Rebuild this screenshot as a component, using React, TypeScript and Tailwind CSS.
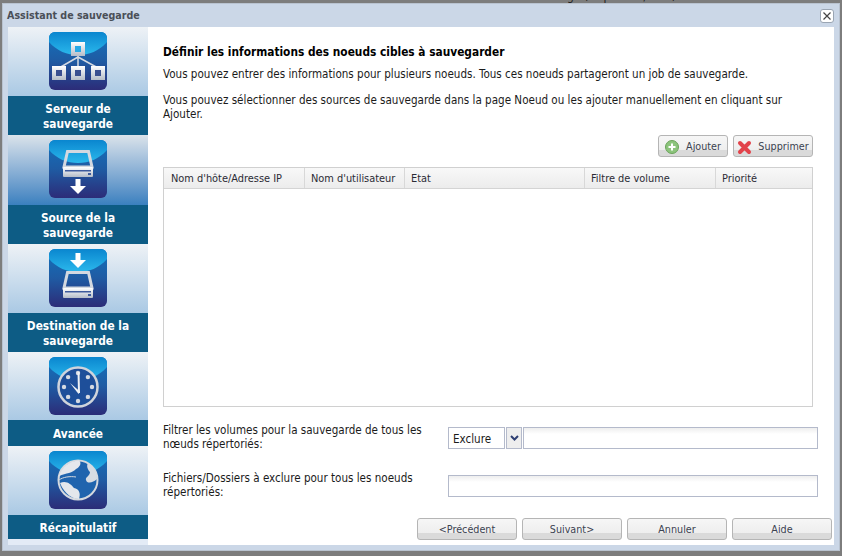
import React from 'react'

const font = { fontFamily: '"DejaVu Sans Condensed", "DejaVu Sans", sans-serif' }

function Tile({ id, children }: { id: string, children: React.ReactNode }) {
    return (
        <svg width="58" height="58" viewBox="0 0 58 58" className="block">
            <defs>
                <linearGradient id={`bg-${id}`} x1="0" y1="0" x2="0" y2="1">
                    <stop offset="0" stopColor="#1272bd" />
                    <stop offset="0.5" stopColor="#1f5ba3" />
                    <stop offset="1" stopColor="#2c2c78" />
                </linearGradient>
                <linearGradient id={`dome-${id}`} x1="0" y1="0" x2="0" y2="1">
                    <stop offset="0" stopColor="#0a86cf" />
                    <stop offset="1" stopColor="#2bb8ec" />
                </linearGradient>
                <linearGradient id={`metal-${id}`} x1="0" y1="0" x2="0" y2="1">
                    <stop offset="0" stopColor="#ffffff" />
                    <stop offset="1" stopColor="#b4bcc8" />
                </linearGradient>
            </defs>
            <rect width="58" height="58" rx="6" fill={`url(#bg-${id})`} />
            <path d="M0 6a6 6 0 0 1 6-6h46a6 6 0 0 1 6 6v4C50 19 40 23 29 23S8 19 0 10z" fill={`url(#dome-${id})`} />
            {children}
        </svg>
    )
}

function NetworkIcon() {
    const m = 'url(#metal-net)'
    return (
        <Tile id="net">
            <path d="M29 23V35M29 25L10 36M29 25L49 36" stroke="#d5dae2" strokeWidth="1.500" fill="none" />
            <rect x="22" y="10" width="14" height="14" fill={m} />
            <rect x="26" y="14" width="6" height="6" fill="#27a9e6" />
            <rect x="3" y="34" width="14" height="14" fill={m} />
            <rect x="22" y="34" width="14" height="14" fill={m} />
            <rect x="42" y="34" width="14" height="14" fill={m} />
            <rect x="7" y="38" width="6" height="6" fill="#3a4f90" />
            <rect x="26" y="38" width="6" height="6" fill="#3a4f90" />
            <rect x="46" y="38" width="6" height="6" fill="#3a4f90" />
        </Tile>
    )
}

function Drive({ y, id }: { y: number, id: string }) {
    return (
        <g transform={`translate(0 ${y})`}>
            <path d="M18.500 1.500H39.500L43 17H15Z" fill="none" stroke="#d3d8e0" strokeWidth="3" />
            <rect x="14" y="17" width="30" height="10" rx="1" fill={`url(#metal-${id})`} />
            <rect x="16" y="20" width="26" height="1.500" fill="#3d5a9c" />
            <rect x="39" y="23" width="3" height="2" fill="#3d5a9c" />
        </g>
    )
}

function SourceIcon() {
    return (
        <Tile id="src">
            <Drive y={10} id="src" />
            <path d="M26.500 39H31.500V46H37L29 54L21 46H26.500Z" fill="#fff" />
        </Tile>
    )
}

function DestIcon() {
    return (
        <Tile id="dst">
            <path d="M26.500 4H31.500V11H37L29 19L21 11H26.500Z" fill="#fff" />
            <Drive y={22} id="dst" />
        </Tile>
    )
}

function ClockIcon() {
    const dots = [0, 45, 90, 135, 180, 225, 270, 315]
    return (
        <Tile id="clk">
            <circle cx="29" cy="30" r="19.500" fill="#1e4f9a" stroke="#cfd4dc" strokeWidth="2.500" />
            {dots.map(a => (
                <circle
                    key={a}
                    cx={29 + 14 * Math.sin(a * Math.PI / 180)}
                    cy={30 - 14 * Math.cos(a * Math.PI / 180)}
                    r="2.200"
                    fill="#d5dae2"
                />
            ))}
            <path d="M28.500 15L30.500 15L31 36L29 36Z" fill="#eef1f5" />
            <path d="M21 26L31 34.500L29.500 37Z" fill="#eef1f5" />
        </Tile>
    )
}

function GlobeIcon() {
    return (
        <Tile id="glb">
            <circle cx="29" cy="29" r="19.500" fill="#2064ae" stroke="#d5d9df" strokeWidth="2" />
            <path d="M10 25C13 16 20 10 30 9.500C33 12 31 16 27 18C24 22 17 22 10 25Z" fill="#e4e7ec" />
            <path d="M39 12C45 16 48 22 48 28C44 32 38 33 37 29C36 26 41 25 41 21C39 19 37 15 39 12Z" fill="#d8dce3" />
            <path d="M11 32C17 29 22 33 25 37C30 38 32 42 30 48C24 48 16 44 11 32Z" fill="#e4e7ec" />
            <path d="M10 29C14 26 21 25 27 26" stroke="#d5d9df" strokeWidth="1" fill="none" />
        </Tile>
    )
}

function Step({ icon, label, barClass, dark, heightClass }: {
    icon: React.ReactNode, label: React.ReactNode, barClass: string, dark?: boolean, heightClass: string
}) {
    return (
        <div>
            <div className={`${heightClass} pt-[5px] flex justify-center bg-gradient-to-b ${dark ? 'from-[#dbe3ea] to-[#3a80bf]' : 'from-[#eef2f6] to-[#aac9e4]'}`}>
                {icon}
            </div>
            <div className={`${barClass} pt-[3px] bg-[#0d5c85] text-white font-bold text-[11.800px] leading-[15px] flex items-center justify-center text-center`}>
                <span>{label}</span>
            </div>
        </div>
    )
}

function Btn({ children, className = '' }: { children: React.ReactNode, className?: string }) {
    return (
        <button className={`h-[22px] pt-[2px] relative flex items-center justify-center rounded-[3px] border border-[#b5b5b5] bg-gradient-to-b from-[#f6f6f6] from-0% via-[#eeeeee] via-70% to-[#dadada] to-70% text-[10.700px] text-[#3b4250] ${className}`}>
            {children}
        </button>
    )
}

export default function App() {
    const columns = [
        { label: "Nom d'hôte/Adresse IP", w: 'w-[141px] pl-[7px]' },
        { label: "Nom d'utilisateur", w: 'w-[100px] pl-[6px]' },
        { label: 'Etat', w: 'w-[180px] pl-[6px]' },
        { label: 'Filtre de volume', w: 'w-[131px] pl-[6px]' },
        { label: 'Priorité', w: 'flex-1 pl-[6px]' },
    ]

    return (
        <div className="w-[842px] h-[556px] overflow-hidden bg-[#7d7d7d] flex flex-col" style={font}>
            {/* page behind the dialog, only a sliver shows */}
            <div className="h-[3px] overflow-hidden pl-[494px] shrink-0">
                <div className="-mt-[10px] text-[12px] leading-[13px] text-[#222]">Taille d'échange (disponible/total) :</div>
            </div>

            <div className="h-[548px] mx-[2px] shrink-0 bg-[#cbd7e7] border border-[#b9c3d0] px-[5px] flex flex-col">
                <div className="h-[23px] shrink-0 flex items-center justify-between">
                    <span className="-ml-[1px] text-[10.600px] font-bold text-[#4a4f57]">Assistant de sauvegarde</span>
                    <span className="w-[14px] h-[14px] flex items-center justify-center rounded-[3px] bg-white border border-[#9aa5b3] text-[#444]">
                        <svg width="8" height="8" viewBox="0 0 8 8"><path d="M0.500 0.500L7.500 7.500M7.500 0.500L0.500 7.500" stroke="#444" strokeWidth="1.200" /></svg>
                    </span>
                </div>

                <div className="h-[518px] shrink-0 flex bg-white">
                    <div className="w-[140px] shrink-0 bg-[#e3ebf6]">
                        <Step icon={<NetworkIcon />} label={<>Serveur de<br />sauvegarde</>} barClass="h-[39px]" heightClass="h-[69px]" />
                        <Step icon={<SourceIcon />} label={<>Source de la<br />sauvegarde</>} barClass="h-[39px]" heightClass="h-[70px]" dark />
                        <Step icon={<DestIcon />} label={<>Destination de la<br />sauvegarde</>} barClass="h-[39px]" heightClass="h-[69px]" />
                        <Step icon={<ClockIcon />} label="Avancée" barClass="h-[26px]" heightClass="h-[68px]" />
                        <Step icon={<GlobeIcon />} label="Récapitulatif" barClass="h-[24px]" heightClass="h-[69px]" />
                    </div>

                    <div className="flex-1 pl-[15px] pr-[2px] pt-[18px] text-[11.550px] text-[#1b1b1b] flex flex-col">
                        <h1 className="text-[11.800px] leading-[15px] font-bold text-black">Définir les informations des noeuds cibles à sauvegarder</h1>
                        <p className="mt-[7px] leading-[14px]">Vous pouvez entrer des informations pour plusieurs noeuds. Tous ces noeuds partageront un job de sauvegarde.</p>
                        <p className="mt-[12px] leading-[14px] pr-[20px]">Vous pouvez sélectionner des sources de sauvegarde dans la page Noeud ou les ajouter manuellement en cliquant sur Ajouter.</p>

                        <div className="mt-[14px] mr-[19px] flex justify-end gap-[5px]">
                            <Btn className="w-[70px] gap-[7px]">
                                <svg width="14" height="14" viewBox="0 0 14 14">
                                    <circle cx="7" cy="7" r="6.500" fill="#8cc47c" stroke="#6aa35a" />
                                    <path d="M7 3.500V10.500M3.500 7H10.500" stroke="#fff" strokeWidth="2" />
                                </svg>
                                <span>Ajouter</span>
                            </Btn>
                            <Btn className="w-[80px] gap-[6px]">
                                <svg width="15" height="15" viewBox="0 0 15 15">
                                    <path d="M3 3L12 12M12 3L3 12" stroke="#e2434b" strokeWidth="4" strokeLinecap="round" />
                                </svg>
                                <span>Supprimer</span>
                            </Btn>
                        </div>

                        <div className="mt-[10px] mr-[19px] h-[240px] shrink-0 border border-[#d0d0d0]">
                            <div className="h-[21px] pt-[3px] flex bg-gradient-to-b from-[#f8f8f8] to-[#ececec] border-b border-[#d4d4d4]">
                                {columns.map(c => (
                                    <div key={c.label} className={`${c.w} -mt-[3px] pt-[3px] border-r border-[#d8d8d8] last:border-r-0 flex items-center whitespace-nowrap text-[10.900px] text-[#2b2b35]`}>
                                        {c.label}
                                    </div>
                                ))}
                            </div>
                        </div>

                        <div className="mt-[15px] flex items-start">
                            <label className="w-[285px] pt-[1px] leading-[14px] shrink-0">Filtrer les volumes pour la sauvegarde de tous les nœuds répertoriés:</label>
                            <div className="mt-[5px] w-[57px] h-[22px] border border-[#b4bacb] flex items-center pl-[4px] pt-[3px]">Exclure</div>
                            <div className="mt-[5px] w-[16px] h-[22px] ml-[1px] border border-[#b4bacb] bg-[#eeeeee] flex items-center justify-center">
                                <svg width="9" height="6" viewBox="0 0 9 6"><path d="M1 1L4.500 4.500L8 1" stroke="#2e3f73" strokeWidth="2" fill="none" /></svg>
                            </div>
                            <div className="mt-[5px] w-[295px] h-[22px] ml-[1px] border border-[#b4bacb] bg-gradient-to-b from-[#eeeeee] to-white to-30%" />
                        </div>

                        <div className="mt-[19px] flex items-start">
                            <label className="w-[285px] pt-[1px] leading-[14px] shrink-0">Fichiers/Dossiers à exclure pour tous les noeuds répertoriés:</label>
                            <div className="mt-[5px] w-[370px] h-[22px] border border-[#b4bacb] bg-gradient-to-b from-[#eeeeee] to-white to-30%" />
                        </div>

                        <div className="mt-[19px] flex justify-end gap-[5px]">
                            {['<Précédent', 'Suivant>', 'Annuler', 'Aide'].map(t => (
                                <Btn key={t} className="w-[100px]">{t}</Btn>
                            ))}
                        </div>
                    </div>
                </div>
            </div>
        </div>
    )
}
